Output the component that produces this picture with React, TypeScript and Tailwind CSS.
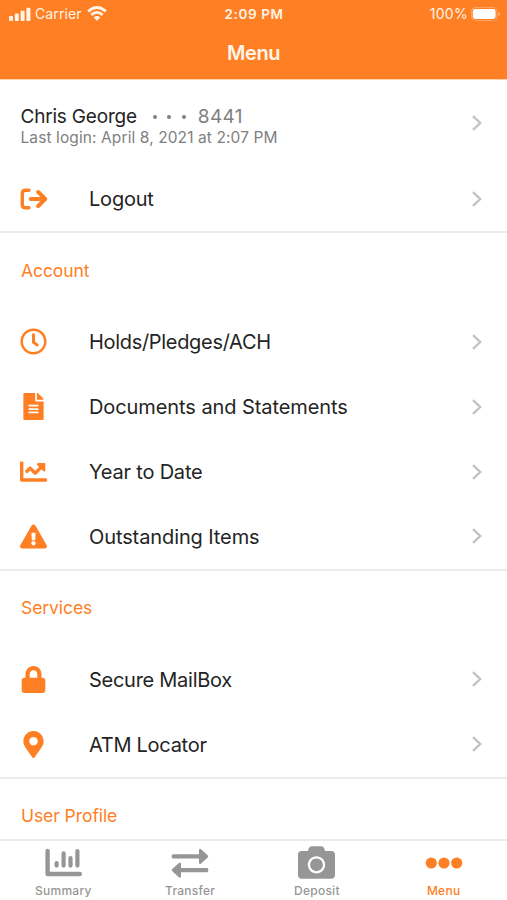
/**
 * Mobile banking menu screen: status bar, profile, grouped menu rows and tab bar.
 */
import type { ReactNode } from "react";
import {
  FaCamera,
  FaChartLine,
  FaExclamationTriangle,
  FaFileAlt,
  FaLock,
  FaMapMarkerAlt,
  FaRegClock,
} from "react-icons/fa";

interface MenuItem {
  label: string;
  icon: ReactNode;
  tracking: string;
}

interface MenuSection {
  title: string;
  items: MenuItem[];
}

const LogoutIcon = () => (
  <svg className="shrink-0" width="28" height="22" viewBox="0 0 28 22" fill="none" stroke="currentColor" strokeLinecap="round" strokeLinejoin="round">
    <path d="M9 2.2H5.4Q2.3 2.2 2.3 5.3V16.7Q2.3 19.8 5.4 19.8H9" strokeWidth="3.4" />
    <path d="M10.8 11H24" strokeWidth="4.2" />
    <path d="M18.2 4L25.2 11L18.2 18" strokeWidth="4" />
  </svg>
);

const SummaryIcon = () => (
  <svg width="38" height="30" viewBox="0 0 38 30" fill="none" stroke="currentColor" strokeWidth="4.4" strokeLinecap="round">
    <path d="M3.6 3V26H35.8" strokeLinejoin="round" />
    <path d="M12.6 15.2V17.6M19.6 5.4V17.6M26.5 10.2V17.6M33.4 3V17.6" strokeWidth="4.2" />
  </svg>
);

const TransferIcon = () => (
  <svg width="38" height="30" viewBox="0 0 38 30" fill="currentColor">
    <path d="M2 6.2H28V2.2Q28.1 -.2 30.1 1.2L36.7 7.2Q37.8 8.3 36.7 9.4L30.1 15.6Q28.1 17 28 14.6V10.4H2Q.7 10.3 .7 9V7.6Q.7 6.3 2 6.2Z" />
    <path d="M36 20H10V16Q9.9 13.6 7.9 15L1.3 21Q.2 22.1 1.3 23.2L7.9 29.2Q9.9 30.6 10 28.2V24.2H36Q37.3 24.1 37.3 22.8V21.4Q37.3 20.1 36 20Z" />
  </svg>
);

const DotsIcon = () => (
  <svg width="38" height="12" viewBox="0 0 38 12" fill="currentColor">
    <circle cx="6.3" cy="6" r="5.6" />
    <circle cx="19" cy="6" r="5.6" />
    <circle cx="31.7" cy="6" r="5.6" />
  </svg>
);

const Chevron = () => (
  <svg className="shrink-0" width="10" height="16" viewBox="0 0 10 16" fill="none" stroke="#c4c4c7" strokeWidth="2.4">
    <path d="M1 1.2L8.2 8L1 14.8" />
  </svg>
);

const SignalIcon = () => (
  <svg width="22" height="14" viewBox="0 0 22 14" fill="currentColor">
    <rect x="0" y="9" width="4" height="5" rx="1" />
    <rect x="5.8" y="6.5" width="4" height="7.5" rx="1" />
    <rect x="11.6" y="3.7" width="4" height="10.3" rx="1" />
    <rect x="17.4" y="0.7" width="4" height="13.3" rx="1" />
  </svg>
);

const WifiIcon = () => (
  <svg width="20" height="15" viewBox="0 0 20 15" fill="none" stroke="currentColor" strokeWidth="2.8">
    <path d="M1.2 5.4Q10 -2.4 18.8 5.4" />
    <path d="M4.3 8.9Q10 3.9 15.7 8.9" />
    <path d="M10 14.7L6.6 11.4Q10 8.6 13.4 11.4Z" fill="currentColor" stroke="none" />
  </svg>
);

const BatteryIcon = () => (
  <svg width="30" height="14" viewBox="0 0 30 14" fill="currentColor">
    <rect x="0.5" y="0.5" width="25.5" height="13" rx="4" fill="none" stroke="currentColor" opacity="0.3" />
    <rect x="1.8" y="2" width="22.8" height="10" rx="2.4" fill="#fff" />
    <path d="M27.3 4.7Q29 5.3 29 7T27.3 9.3Z" opacity="0.45" />
  </svg>
);

const sections: MenuSection[] = [
  {
    title: "Account",
    items: [
      { label: "Holds/Pledges/ACH", icon: <FaRegClock size={27} />, tracking: "tracking-[-0.31px]" },
      { label: "Documents and Statements", icon: <FaFileAlt size={27} />, tracking: "tracking-[-0.08px]" },
      { label: "Year to Date", icon: <FaChartLine size={27} />, tracking: "tracking-[-0.2px]" },
      { label: "Outstanding Items", icon: <FaExclamationTriangle size={27} />, tracking: "tracking-[-0.1px]" },
    ],
  },
  {
    title: "Services",
    items: [
      { label: "Secure MailBox", icon: <FaLock size={27} />, tracking: "tracking-[-0.27px]" },
      { label: "ATM Locator", icon: <FaMapMarkerAlt size={27} />, tracking: "tracking-[-0.28px]" },
    ],
  },
];

const tabs = [
  { label: "Summary", icon: <SummaryIcon /> },
  { label: "Transfer", icon: <TransferIcon /> },
  { label: "Deposit", icon: <FaCamera size={37} /> },
  { label: "Menu", icon: <DotsIcon />, active: true },
];

const MenuRow = ({ label, icon, tracking }: MenuItem) => (
  <button type="button" className="flex h-[64.8px] w-full items-center pr-[25px] pl-[20.4px] text-left">
    <span className="flex w-[27px] shrink-0 justify-center text-[#ff8024]">{icon}</span>
    <span className={`ml-[41.6px] flex-1 pt-px text-[20px] text-[#242424] ${tracking}`}>{label}</span>
    <Chevron />
  </button>
);

const SectionTitle = ({ children }: { children: ReactNode }) => (
  <h2 className="flex h-[76.2px] items-center pb-px pl-[21px] text-[17.5px] tracking-[-0.07px] text-[#ff8024]">
    {children}
  </h2>
);

export default function App() {
  return (
    <div className="flex h-[900px] w-[507px] flex-col overflow-hidden bg-white font-['Inter',sans-serif]">
      <header className="h-20 shrink-0 border-b border-[#ffd3b0] bg-[#ff8024] text-[#fff4e8]">
        <div className="grid h-[27px] grid-cols-3 items-center pr-[6px] pl-[9px] text-[14px]">
          <div className="flex items-center gap-1">
            <SignalIcon />
            <span className="tracking-[0.1px]">Carrier</span>
            <span className="ml-px">
              <WifiIcon />
            </span>
          </div>
          <span className="pt-[2px] pr-[2px] text-center text-[13.5px] font-semibold tracking-[0.6px]">2:09 PM</span>
          <div className="flex items-center justify-end gap-[3px]">
            <span className="tracking-[0.3px]">100%</span>
            <BatteryIcon />
          </div>
        </div>
        <h1 className="flex h-[51px] items-center justify-center text-[20px] font-semibold tracking-[-0.4px]">
          Menu
        </h1>
      </header>

      <main className="min-h-0 flex-1 overflow-hidden">
        <section className="border-b-2 border-[#ebebeb]">
          <button type="button" className="flex h-[86.6px] w-full items-center pr-[25px] pl-[20.5px] text-left">
            <span className="flex-1 pt-[7px]">
              <span className="flex items-center text-[19px] leading-[23px] tracking-[-0.2px] text-[#242424]">
                Chris George
                <span className="ml-4 flex gap-[10.5px]">
                  <i className="size-1 rounded-full bg-[#808080]" />
                  <i className="size-1 rounded-full bg-[#808080]" />
                  <i className="size-1 rounded-full bg-[#808080]" />
                </span>
                <span className="ml-3 tracking-[0.3px] text-[#808080]">8441</span>
              </span>
              <span className="block text-[15.5px] leading-5 tracking-[0.1px] text-[#808080]">
                Last login: April 8, 2021 at 2:07 PM
              </span>
            </span>
            <Chevron />
          </button>
          <MenuRow label="Logout" icon={<LogoutIcon />} tracking="tracking-[-0.2px]" />
        </section>

        {sections.map((section) => (
          <section key={section.title} className="border-b-2 border-[#ebebeb]">
            <SectionTitle>{section.title}</SectionTitle>
            {section.items.map((item) => (
              <MenuRow key={item.label} {...item} />
            ))}
          </section>
        ))}

        <SectionTitle>User Profile</SectionTitle>
      </main>

      <nav className="grid h-[61px] shrink-0 grid-cols-4 border-t-2 border-[#ebebeb]">
        {tabs.map((tab) => (
          <button
            key={tab.label}
            type="button"
            className={`flex flex-col items-center ${tab.active ? "text-[#ff8024]" : "text-[#969696]"}`}
          >
            <span className="flex h-[43px] items-center">{tab.icon}</span>
            <span className="text-[12px] leading-[14px] font-medium tracking-[0.25px]">{tab.label}</span>
          </button>
        ))}
      </nav>
    </div>
  );
}
